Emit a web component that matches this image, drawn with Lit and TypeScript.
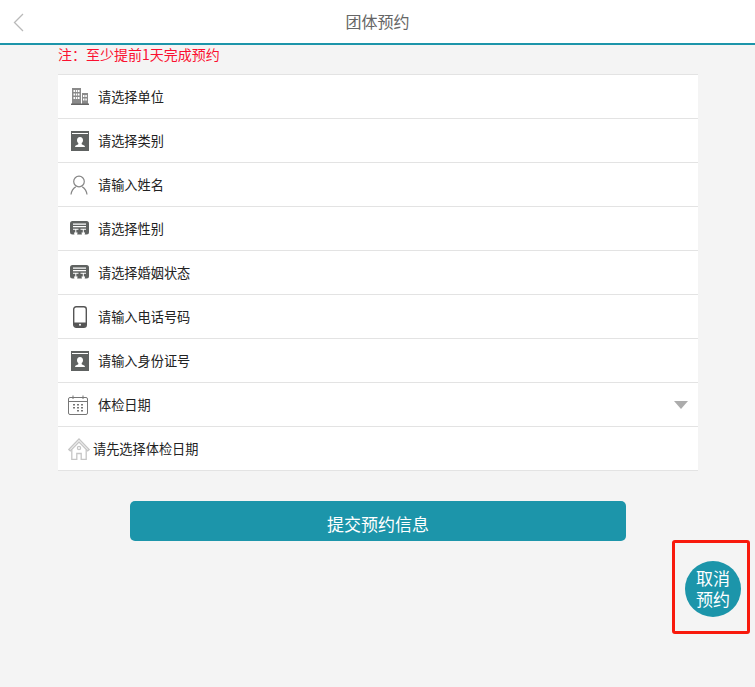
import { LitElement, html, css, svg } from "lit";
import { customElement } from "lit/decorators.js";

const building = svg`<svg class="ic" width="18" height="17" viewBox="0 0 18 17"><path fill="#8a8a8a" d="M1 0h9v16H1zM11 5h6v11h-6z"/><path fill="#fff" d="M2.500 2h1.500v2H2.500zM4.800 2h1.500v2H4.800zM7 2h1.500v2H7zM2.500 5.500h1.500v2H2.500zM4.800 5.500h1.500v2H4.800zM7 5.500h1.500v2H7zM2.500 9h1.500v2H2.500zM4.800 9h1.500v2H4.800zM7 9h1.500v2H7zM12 7h1.500v2H12zM14.300 7h1.500v2h-1.500zM12 10.500h1.500v2H12zM14.300 10.500h1.500v2h-1.500z"/><path fill="#666" d="M0 15.500h18V17H0z"/></svg>`;
const contact = svg`<svg class="ic" width="18" height="20" viewBox="0 0 18 20"><path fill="#5f6261" d="M0 0h18v20H0z"/><path fill="#fff" d="M1 2h16v1H1zM9 6c2 0 3 1.400 3 3.200 0 1.200-.5 2.300-1.300 2.900v1.200c.8.600 3.300.9 3.300 2.700H4c0-1.800 2.500-2.100 3.300-2.700v-1.200C6.500 11.500 6 10.400 6 9.200 6 7.400 7 6 9 6z"/></svg>`;
const person = svg`<svg class="ic" width="18" height="20" viewBox="0 0 18 20" fill="none" stroke="#858585" stroke-width="1.200"><circle cx="9" cy="6.500" r="5.300"/><path d="M1 19.500c.4-4 2.800-6.500 4.800-7.800M17 19.500c-.4-4-2.800-6.500-4.800-7.800"/></svg>`;
const card = svg`<svg class="ic" width="19" height="15" viewBox="0 0 19 15"><rect width="19" height="13.500" rx="2.500" fill="#5f6261"/><path fill="#fff" d="M3 2.500h13v1.200H3zM3 5h13v1.200H3zM3 7.800h5.500v1H3zM10.500 7.800H16v1h-5.500zM5.300 8.800h1V12h-1zM4 11.500h3.600l-.6 3H4.600zM12.800 8.800h1V12h-1zM11.500 11.500h3.600l-.6 3h-2.400z"/></svg>`;
const phone = svg`<svg class="ic" width="14" height="22" viewBox="0 0 14 22"><rect x=".7" y=".7" width="12.600" height="20.600" rx="2.500" fill="none" stroke="#555" stroke-width="1.400"/><path fill="#555" d="M1 16.500h12V19a2 2 0 0 1-2 2H3a2 2 0 0 1-2-2z"/><circle cx="7" cy="18.700" r="1" fill="#fff"/></svg>`;
const calendar = svg`<svg class="ic" width="20" height="20" viewBox="0 0 20 20" fill="none" stroke="#777"><rect x=".5" y="2.500" width="19" height="17" rx="1.500"/><path d="M.5 6.500h19M5 .5v3.500M15 .5v3.500"/><path stroke="none" fill="#777" d="M5 9h2v1.500H5zM9 9h2v1.500H9zM13 9h2v1.500h-2zM5 12h2v1.500H5zM9 12h2v1.500H9zM13 12h2v1.500h-2zM9 15h2v1.500H9zM13 15h2v1.500h-2z"/></svg>`;
const house = svg`<svg class="ic" width="22" height="22" viewBox="0 0 22 22" fill="none" stroke="#c6c6c6" stroke-width="1.300"><path d="M.8 11.500 11 1l10.200 10.500-1.500 1.300L11 4 2.300 12.800z"/><path d="M3.800 11.500v10h5v-6h4.400v6h5v-10"/><circle cx="11" cy="10" r="1.600"/></svg>`;

const rows = [
  { icon: building, text: "请选择单位", slot: "a" },
  { icon: contact, text: "请选择类别", slot: "a" },
  { icon: person, text: "请输入姓名", slot: "p" },
  { icon: card, text: "请选择性别", slot: "a" },
  { icon: card, text: "请选择婚姻状态", slot: "a" },
  { icon: phone, text: "请输入电话号码", slot: "a" },
  { icon: contact, text: "请输入身份证号", slot: "a" },
  { icon: calendar, text: "体检日期", slot: "select" },
  { icon: house, text: "请先选择体检日期", slot: "home" },
];

@customElement("app-root")
export class AppRoot extends LitElement {
  static styles = css`
    :host {
      display: block;
      position: relative;
      min-height: 687px;
      background: #f4f4f4;
      font-family: "Noto Sans CJK SC", "Liberation Sans", sans-serif;
      overflow: hidden;
    }
    .hdr {
      height: 43px;
      background: #fff;
      border-bottom: 2px solid #1c95aa;
      display: flex;
      justify-content: center;
      position: relative;
      font-size: 16px;
      color: #666;
    }
    .title {
      line-height: 42px;
    }
    .back {
      position: absolute;
      left: 13px;
      top: 13px;
    }
    .main {
      margin: 0 57px 0 58px;
    }
    .note {
      height: 29px;
      font-size: 14px;
      line-height: 19px;
      color: #fb1030;
    }
    .form {
      background: #fff;
      border-top: 1px solid #e3e3e3;
    }
    .row {
      height: 43px;
      border-bottom: 1px solid #e3e3e3;
      display: flex;
      align-items: center;
      font-size: 13.2px;
      color: #222;
    }
    .icw {
      width: 40px;
      flex: none;
      display: flex;
      justify-content: center;
      box-sizing: border-box;
      padding-left: 3px;
    }
    .row.p .icw {
      padding-left: 2px;
    }
    .row.select .icw {
      padding-left: 0;
    }
    .row.home .icw {
      width: 35px;
      padding-left: 6px;
    }
    .txt {
      flex: 1;
      line-height: 20px;
    }
    .ic {
      display: block;
    }
    .arrow {
      width: 0;
      height: 0;
      border-left: 7.500px solid transparent;
      border-right: 7.500px solid transparent;
      border-top: 8px solid #acacac;
      margin-right: 10px;
    }
    .submit {
      display: block;
      box-sizing: border-box;
      width: 496px;
      height: 40px;
      margin: 30px 0 0 72px;
      padding: 0;
      border: 0;
      border-radius: 5px;
      background: #1c95aa;
      color: #fff;
      font: inherit;
      font-size: 17px;
      line-height: 45px;
    }
    .mark {
      position: absolute;
      left: 672px;
      top: 540px;
      width: 78px;
      height: 94px;
      box-sizing: border-box;
      border: 3px solid #f8190c;
      border-radius: 3px;
    }
    .cancel {
      position: absolute;
      left: 685px;
      top: 561px;
      width: 56px;
      height: 56px;
      box-sizing: border-box;
      padding-bottom: 2px;
      border-radius: 50%;
      background: #1c95aa;
      color: #fff;
      font-size: 17px;
      line-height: 21px;
      display: flex;
      align-items: center;
      justify-content: center;
      text-align: center;
    }
  `;

  render() {
    return html`
      <div class="hdr">
        <svg class="back" width="11" height="19" viewBox="0 0 11 19" fill="none" stroke="#b9b9b9" stroke-width="1.300"><path d="M10 1 1.500 9.500 10 18"/></svg>
        <span class="title">团体预约</span>
      </div>
      <div class="main">
        <div class="note">注：至少提前1天完成预约</div>
        <div class="form">
          ${rows.map(
            (r) => html`
              <div class="row ${r.slot}">
                <span class="icw">${r.icon}</span>
                <span class="txt">${r.text}</span>
                ${r.slot === "select" ? html`<span class="arrow"></span>` : ""}
              </div>
            `
          )}
        </div>
        <button class="submit">提交预约信息</button>
      </div>
      <div class="mark"></div>
      <div class="cancel"><span>取消<br />预约</span></div>
    `;
  }
}
